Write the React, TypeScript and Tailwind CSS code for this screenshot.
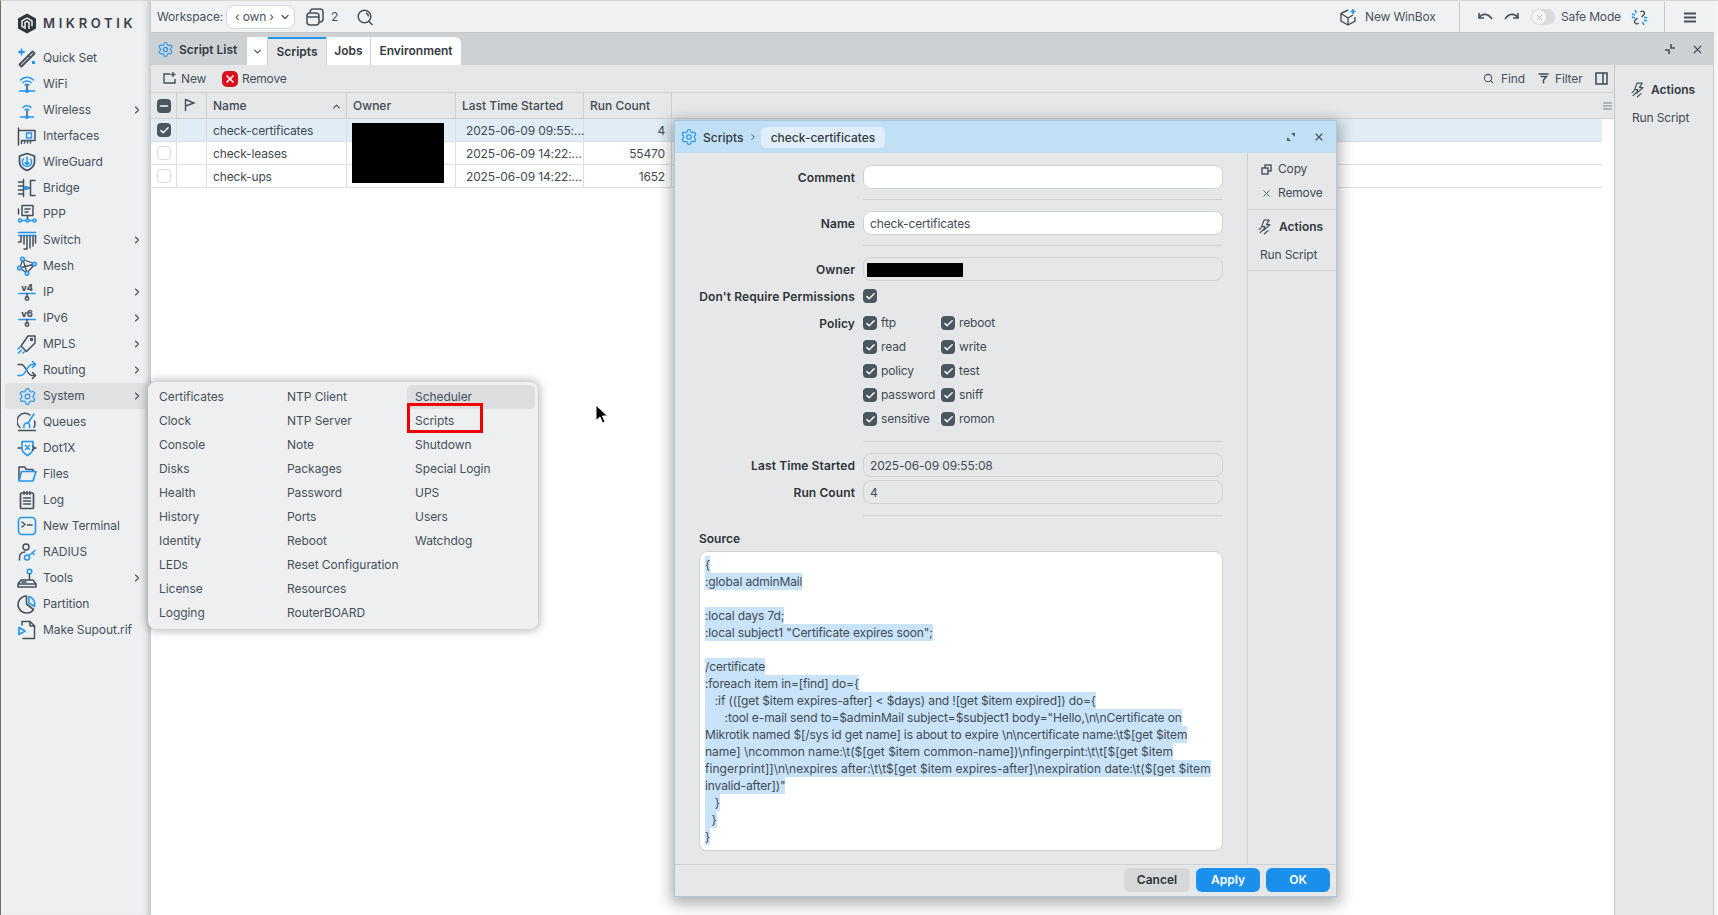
import React from "react";
import { Settings, ChevronDown, ChevronRight, ChevronUp, X, Search, Check, Minus } from "lucide-react";

const G = "#46505b";
const B = "#2196f3";

function Ic({ children, size = 20, className = "" }: { children: React.ReactNode; size?: number; className?: string }) {
  return (
    <svg width={size} height={size} viewBox="0 0 20 20" fill="none" stroke={G} strokeWidth={1.5} strokeLinecap="round" strokeLinejoin="round" className={"shrink-0 " + className}>
      {children}
    </svg>
  );
}

const icons: Record<string, React.ReactNode> = {
  "Quick Set": (<Ic><path d="M2.5 16.500L15.500 3.500l2 2L4.500 18.500z" strokeWidth={1.8} /><path d="M11.500 7.500l2 2" /><path d="M4.500 1.500v5M2 4h5" stroke={B} strokeWidth={1.8} /><rect x="15" y="13" width="3" height="3" fill={B} stroke="none" /></Ic>),
  WiFi: (<Ic><path d="M3.500 6a9 9 0 0 1 13 0M6 8.600a5.600 5.600 0 0 1 8 0M8 11a2.800 2.800 0 0 1 4 0" stroke={B} /><path d="M10 11v5.500" /><path d="M2.500 17h15" stroke={B} /><circle cx="10" cy="17" r="1.300" fill={B} stroke={B} /></Ic>),
  Wireless: (<Ic><path d="M6 7.500a5.600 5.600 0 0 1 8 0M8 10a2.800 2.800 0 0 1 4 0" stroke={B} /><path d="M10 11v5.500" /><path d="M3.500 17h13" stroke={B} /><circle cx="10" cy="17" r="1.300" fill={B} stroke={B} /></Ic>),
  Interfaces: (<Ic><path d="M1.500 2v17M1.500 4.500H18v10H4.500v3M7.500 15v2M10.500 15v2M13.500 15v2" /><rect x="9.500" y="7" width="5" height="5" stroke={B} /></Ic>),
  WireGuard: (<Ic><path d="M10 1.500l7.500 2.500v6c0 4.500-3.500 7-7.500 8.500-4-1.500-7.500-4-7.500-8.500V4z" strokeWidth={1.7} /><path d="M6.500 7a4.600 4.600 0 1 0 7 0" stroke={B} /><path d="M10 5v8M8 10.500l2 2.500 2-2.500" stroke={B} /></Ic>),
  Bridge: (<Ic><path d="M6.500 1.500v17M1.500 4h5M1.500 8h5M1.500 12h5M1.500 16h5M18 2.500h-4.500v15H18M13.500 10h-4" /><circle cx="9" cy="10" r="1.500" fill={B} stroke={B} /></Ic>),
  PPP: (<Ic><rect x="5" y="1.500" width="11" height="10" rx=".5" /><path d="M8 5h5M8 8h3M10.500 11.500V16M1.500 5v5" /><path d="M3 16.500h15" stroke={B} /><circle cx="3" cy="16.500" r="1.500" stroke={B} fill="#eeeff1" /><circle cx="17.500" cy="16.500" r="1.500" stroke={B} fill="#eeeff1" /><circle cx="10.500" cy="16.500" r="1.500" stroke={B} fill="#eeeff1" /></Ic>),
  Switch: (<Ic><path d="M1.500 2.500h17M1.500 5.500h17" stroke={B} /><path d="M4 6v6H1.500M7 6v8M10 6v13H7M13 6v12M16 6v10M18.500 6v7" /></Ic>),
  Mesh: (<Ic><path d="M6 3.500l12 4.500-8 9zM6 3.500L2.500 12 10 17M2.500 12L18 8" strokeWidth={1.3} /><circle cx="5.500" cy="3" r="1.800" stroke={B} fill="#eeeff1" /><circle cx="17.500" cy="8" r="1.800" stroke={B} fill="#eeeff1" /><circle cx="2.500" cy="12" r="1.800" stroke={B} fill="#eeeff1" /><circle cx="10" cy="17.500" r="1.800" stroke={B} fill="#eeeff1" /></Ic>),
  IP: (<Ic><text x="10" y="8.500" fontSize="9" fontWeight="800" textAnchor="middle" fill={G} stroke="none" fontFamily="Inter, sans-serif">v4</text><path d="M2 11.500h16" stroke={B} strokeWidth={1.7} /><path d="M10 11.500v3" /><circle cx="10" cy="16.500" r="1.700" /></Ic>),
  IPv6: (<Ic><text x="10" y="8.500" fontSize="9" fontWeight="800" textAnchor="middle" fill={G} stroke="none" fontFamily="Inter, sans-serif">v6</text><path d="M2 11.500h16" stroke={B} strokeWidth={1.7} /><path d="M10 11.500v3" /><circle cx="10" cy="16.500" r="1.700" /></Ic>),
  MPLS: (<Ic><path d="M11 2h7v7l-8.500 8.500L4 12z" /><circle cx="14.500" cy="5.500" r="1" /><path d="M1 15l2-2M1.500 19l3-3M6 19l1.500-1.500" stroke={B} /></Ic>),
  Routing: (<Ic><path d="M1 4.500h3c5 0 6 11 11 11h3" /><path d="M1 15.500h3c5 0 6-11 11-11h3" stroke={B} /><path d="M15.500 1.500l3 3-3 3" stroke={B} /><path d="M15.500 12.500l3 3-3 3" /></Ic>),
  System: (<Settings size={19} color={B} strokeWidth={1.5} className="mx-[0.5px] shrink-0" />),
  Queues: (<Ic><path d="M3 15.500A8 8 0 0 1 13 3M17.500 9a8 8 0 0 1-.500 6.500M1.500 18.500h17" /><path d="M17 2l-6 9" stroke={B} /><path d="M7 15.500a3.500 3.500 0 0 1 4-4.500l1 1a3.500 3.500 0 0 1 .5 3.500" stroke={B} /></Ic>),
  Dot1X: (<Ic><path d="M5 3.500h11v7c0 3-2 5-5.500 7C7 15.500 5 13.500 5 10.500z" stroke={B} strokeWidth={1.6} /><path d="M8.500 7.500l4 4M12.500 7.500l-4 4" stroke={B} /><path d="M1 10h3M17 10h2M15.500 8l2.500 2-2.500 2" /></Ic>),
  Files: (<Ic><path d="M2 16V3h5.500l2 2.500H16v2" /><path d="M2 17l2.500-9.500H19L16 17z" stroke={B} strokeWidth={1.6} /></Ic>),
  Log: (<Ic><rect x="3.500" y="3" width="13" height="15.500" rx="1" strokeWidth={1.7} /><path d="M7 1.500v3M10 1.500v3M13 1.500v3M6.500 8h7M6.500 11h7M6.500 14h7" /></Ic>),
  "New Terminal": (<Ic><rect x="1.500" y="1.500" width="17" height="17" rx="3.500" stroke={B} strokeWidth={1.6} /><path d="M5 6l3 2.500L5 11M10.500 9H15" /></Ic>),
  RADIUS: (<Ic><circle cx="9" cy="5" r="3" /><path d="M2.500 18v-2.500c0-3 2-5.500 5.500-5.500" /><circle cx="10" cy="15.500" r="2.500" stroke={B} /><path d="M12 13.500l6-5M15.500 10.500l1.500 2" stroke={B} /></Ic>),
  Tools: (<Ic><circle cx="12.500" cy="3.500" r="2.300" stroke={B} /><path d="M12.500 6v6M4 12h12l3 4v3H1v-3zM1 16h18M5 14h4" /></Ic>),
  Partition: (<Ic><path d="M9.500 2a8.500 8.500 0 1 0 7 13.500L9.500 10z" strokeWidth={1.6} /><path d="M12 2.500a8 8 0 0 1 5.500 10L12 9z" stroke={B} /></Ic>),
  "Make Supout.rif": (<Ic><path d="M5 5V1.500h8l4.500 4.500V18.500H6" /><path d="M13 1.500V6h4.500" /><path d="M2 7.500l6 3.500-6 3.500z" stroke={B} strokeWidth={1.7} /></Ic>),
};

const nav: [string, boolean][] = [
  ["Quick Set", false], ["WiFi", false], ["Wireless", true], ["Interfaces", false], ["WireGuard", false], ["Bridge", false], ["PPP", false], ["Switch", true], ["Mesh", false], ["IP", true], ["IPv6", true], ["MPLS", true], ["Routing", true], ["System", true], ["Queues", false], ["Dot1X", false], ["Files", false], ["Log", false], ["New Terminal", false], ["RADIUS", false], ["Tools", true], ["Partition", false], ["Make Supout.rif", false],
];

const subCols = [
  ["Certificates", "Clock", "Console", "Disks", "Health", "History", "Identity", "LEDs", "License", "Logging"],
  ["NTP Client", "NTP Server", "Note", "Packages", "Password", "Ports", "Reboot", "Reset Configuration", "Resources", "RouterBOARD"],
  ["Scheduler", "Scripts", "Shutdown", "Special Login", "UPS", "Users", "Watchdog"],
];

const sourceLines: [string, string][] = [
  ["{", "tracking-[-0.12px]"],
  [":global adminMail", "tracking-[-0.12px]"],
  ["", ""],
  [":local days 7d;", "tracking-[-0.12px]"],
  [':local subject1 "Certificate expires soon";', "tracking-[-0.12px]"],
  ["", ""],
  ["/certificate", "tracking-[-0.12px]"],
  [":foreach item in=[find] do={", "tracking-[-0.12px]"],
  ["   :if (([get $item expires-after] < $days) and ![get $item expired]) do={", "tracking-[-0.12px]"],
  ['      :tool e-mail send to=$adminMail subject=$subject1 body="Hello,\\n\\nCertificate on', "tracking-[-0.11px]"],
  ["Mikrotik named $[/sys id get name] is about to expire \\n\\ncertificate name:\\t$[get $item", "tracking-[-0.15px]"],
  ["name] \\ncommon name:\\t($[get $item common-name])\\nfingerpint:\\t\\t[$[get $item", "tracking-[0px]"],
  ["fingerprint]]\\n\\nexpires after:\\t\\t$[get $item expires-after]\\nexpiration date:\\t($[get $item", "tracking-[0.04px]"],
  ['invalid-after])"', "tracking-[-0.12px]"],
  ["   }", "tracking-[-0.12px]"],
  ["  }", "tracking-[-0.12px]"],
  ["}", "tracking-[-0.12px]"],
];

function Box({ on, minus, cls = "" }: { on?: boolean; minus?: boolean; cls?: string }) {
  if (minus)
    return <span className={"flex h-[14px] w-[14px] shrink-0 items-center justify-center rounded-[4px] bg-[#4b5661] " + cls}><Minus size={12} color="#fff" strokeWidth={3} /></span>;
  if (on)
    return <span className={"flex h-[14px] w-[14px] shrink-0 items-center justify-center rounded-[4px] bg-[#4b5661] " + cls}><Check size={11} color="#fff" strokeWidth={3} /></span>;
  return <span className={"block h-[14px] w-[14px] shrink-0 rounded-[4px] border border-[#d8dbdd] bg-white " + cls} />;
}

function Actions() {
  return (
    <Ic size={16}>
      <path d="M14 1.500H7.500L4.500 9.500h4L7 14l8-7h-4.500z" />
      <path d="M1.500 13l2.500-2M2.500 17l4-3.500M8 18.500l4.500-4" stroke={G} />
    </Ic>
  );
}

function Cols({ cells, row }: { cells: React.ReactNode[]; row?: boolean }) {
  const w = ["w-[26px]", "w-[30px]", "w-[140px]", "w-[109px]", "w-[128px]", "w-[88px]"];
  return (
    <>
      {cells.map((c, i) => (
        <div key={i} className={"flex h-full shrink-0 items-center border-r " + (row ? "border-[#dcdfe1] " : "border-[#cdd1d4] ") + w[i]}>
          {c}
        </div>
      ))}
    </>
  );
}

function Row({ name, date, count, on }: { name: string; date: string; count: string; on?: boolean }) {
  return (
    <div className={"flex h-[23px] items-center border-b border-[#dcdfe1] text-[#414a52] " + (on ? "bg-[#e0edf6]" : "bg-white")}>
      <Cols row cells={[
        <Box on={on} cls="ml-[6px]" />,
        null,
        <span className="pl-[6px] pt-px">{name}</span>,
        null,
        <span className="whitespace-nowrap pl-[10px] pt-px">{date}</span>,
        <span className="w-full pr-[6px] pt-px text-right">{count}</span>,
      ]} />
    </div>
  );
}

function Line() {
  return <div className="h-px w-[360px] bg-[#cfd2d5]" />;
}

function Field({ label, value, white, mt, children }: { label: string; value?: string; white?: boolean; mt: string; children?: React.ReactNode }) {
  return (
    <div className={"flex items-center gap-2 " + mt}>
      <div className="w-[180px] pt-px text-right font-semibold tracking-[0.1px] text-[#2e3338]">{label}</div>
      <div className={"flex h-6 w-[360px] items-center rounded-lg border border-[#d0d3d6] px-[6px] pt-px text-[#414a52] " + (white ? "bg-white" : "bg-[#e6e7e9]")}>
        {value}
        {children}
      </div>
    </div>
  );
}

function Pol({ text }: { text: string }) {
  return (
    <div className="flex h-6 items-center gap-1 text-[#414a52]">
      <Box on />
      <span>{text}</span>
    </div>
  );
}

export default function App() {
  return (
    <div className="relative flex h-[915px] w-[1718px] overflow-hidden border-t border-l border-t-[#d6d6d4] border-l-[#6f6f6b] bg-[#f3f4f5] text-[12px] tracking-[-0.15px] text-[#414a52]" style={{ fontFamily: "Inter, 'Noto Sans', sans-serif" }}>
      {/* Sidebar */}
      <aside className="flex h-full w-[150px] shrink-0 flex-col bg-[#eeeff1] shadow-[inset_-7px_0_6px_-5px_rgba(90,100,110,0.35)]">
        <div className="flex h-[44px] shrink-0 items-center gap-[6px] pl-[16px]">
          <svg width="20" height="21" viewBox="0 0 20 21" className="shrink-0">
            <path d="M10 .5l9 5v10l-9 5-9-5v-10z" fill="#2f353b" />
            <path d="M10 5l5 2.800v5.500M10 5L5 7.800v5.500l3 1.700V9.500l2-1.200 2 1.200V16" fill="none" stroke="#fff" strokeWidth="1.400" />
          </svg>
          <span className="whitespace-nowrap text-[13px] font-semibold leading-none tracking-[0.28em] text-[#3a4047]">MIKROTIK</span>
        </div>
        <nav className="flex flex-col pl-1 tracking-[-0.08px]">
          {nav.map(([n, sub]) => (
            <div key={n} className={"flex h-[26px] items-center gap-[6px] rounded-l-[4px] pl-3 " + (n === "System" ? "bg-[#dfe1e3]" : "")}>
              {icons[n]}
              <span className="flex-1 whitespace-nowrap text-[#47515b]">{n}</span>
              {sub && <ChevronRight size={12} strokeWidth={2.2} color={G} className="mr-[8px]" />}
            </div>
          ))}
        </nav>
      </aside>

      {/* Main */}
      <div className="flex h-full w-[1563px] shrink-0 flex-col border-r-0">
        {/* top bar */}
        <header className="flex h-[32px] shrink-0 items-center border-b border-[#c5c9cc] bg-[#f0f1f2] pl-[6px] pr-[18px] pt-[1px] text-[#47515b]">
          <span className="w-[64px] whitespace-nowrap">Workspace:</span>
          <div className="ml-[5px] flex h-[24px] w-[69px] items-center rounded-lg border border-[#d5d8da] bg-white pl-[8px]">
            <span className="flex-1 whitespace-pre">‹ own ›</span>
            <ChevronDown size={12} strokeWidth={2.4} className="mr-[3px]" />
          </div>
          <svg width="18" height="18" viewBox="0 0 18 18" fill="none" stroke={G} strokeWidth="1.500" className="ml-[11px]">
            <rect x="1" y="5" width="12" height="12" rx="3" />
            <path d="M1 9h12M4 5V4a3 3 0 0 1 3-3h7a3 3 0 0 1 3 3v7a3 3 0 0 1-3 3h-1" />
          </svg>
          <span className="ml-[7px] w-[7px]">2</span>
          <svg width="17" height="17" viewBox="0 0 17 17" fill="none" stroke={G} strokeWidth="1.500" className="ml-[19px]">
            <circle cx="7.500" cy="7.500" r="6.300" />
            <path d="M11.500 12l4 4M9 4a4 4 0 0 1 2.500 3.500" />
          </svg>
          <div className="flex-1" />
          <svg width="18" height="18" viewBox="0 0 18 18" fill="none" stroke={G} strokeWidth="1.400">
            <path d="M9 2L2 5.500v7.500l7 4 7-4V9M2 5.500L9 10l5-3M9 10v7" />
            <path d="M14 1v5M11.500 3.500h5" stroke={B} strokeWidth="1.600" />
          </svg>
          <span className="ml-2 w-[68px] whitespace-nowrap">New WinBox</span>
          <div className="ml-[26px] h-full w-px bg-[#c5c9cc]" />
          <svg width="15" height="10" viewBox="0 0 15 10" fill="none" stroke={G} strokeWidth="1.600" className="ml-[18px]">
            <path d="M1 1v5h5M1 6c3-5 9-5 13 1" />
          </svg>
          <svg width="15" height="10" viewBox="0 0 15 10" fill="none" stroke={G} strokeWidth="1.600" className="ml-[11px]">
            <path d="M14 1v5H9M14 6C11 1 5 1 1 7" />
          </svg>
          <div className="ml-[12px] flex h-4 w-6 items-center rounded-full bg-[#d8dadc] pl-[1px]">
            <span className="flex h-[14px] w-[14px] items-center justify-center rounded-full bg-[#f4f5f6]"><X size={9} color="#b4b8bc" strokeWidth={2.5} /></span>
          </div>
          <span className="ml-[6px] w-[58px] whitespace-nowrap">Safe Mode</span>
          <svg width="17" height="17" viewBox="0 0 17 17" fill="none" stroke={G} strokeWidth="1.400" className="ml-[12px]">
            <path d="M9.500 3a2.300 2.300 0 0 1 4 2l-3 3M7.500 14a2.300 2.300 0 0 1-4-2l3-3" />
            <path d="M4 1l1.500 3M1 5l3 1M13 16l-1.500-3M16 12l-3-1M13 8l3 1M4 9L1 8" stroke={B} strokeWidth="1.600" />
          </svg>
          <div className="ml-[16px] h-full w-px bg-[#c5c9cc]" />
          <svg width="12" height="11" viewBox="0 0 12 11" stroke={G} strokeWidth="1.800" className="ml-[19px]">
            <path d="M0 1.500h12M0 5.500h12M0 9.500h12" />
          </svg>
        </header>

        {/* window */}
        <div className="flex min-h-0 flex-1 flex-col">
          <div className="flex h-[32px] shrink-0 items-end bg-[#cdd1d4] pl-[6px]">
            <div className="flex h-full items-center gap-[5px] pr-[8px] font-semibold tracking-normal text-[#33393f]">
              <Settings size={17} color={B} strokeWidth={1.5} />
              <span className="w-[60px] whitespace-nowrap pt-px">Script List</span>
            </div>
            <div className="flex h-[28px] w-[20px] items-center justify-center bg-white"><ChevronDown size={11} strokeWidth={2.6} color={G} /></div>
            <div className="ml-px flex h-[28px] w-[58px] items-center justify-center border-t-2 border-[#2196f3] bg-[#e6e7e9] font-semibold tracking-normal text-[#33393f]">Scripts</div>
            <div className="ml-px flex h-[28px] w-[43px] items-center justify-center bg-white font-semibold tracking-normal text-[#33393f]">Jobs</div>
            <div className="ml-px flex h-[28px] w-[90px] items-center justify-center rounded-tr-md bg-white font-semibold tracking-normal text-[#33393f]">Environment</div>
            <div className="flex-1" />
            <div className="flex h-full items-center pr-[10px]">
              <svg width="12" height="12" viewBox="0 0 12 12" fill="none" stroke={G} strokeWidth="1.600" className="mr-[15px]">
                <path d="M7 1v4h4M5 11V7H1" />
              </svg>
              <X size={13} color={G} strokeWidth={2.2} />
            </div>
          </div>

          <div className="flex min-h-0 flex-1">
            <div className="flex w-[1463px] shrink-0 flex-col bg-white">
              <div className="flex h-[28px] shrink-0 items-center border-b border-[#cdd1d4] bg-[#e6e7e9] pl-[12px] text-[#47515b]">
                <svg width="13" height="13" viewBox="0 0 13 13" fill="none" stroke={G} strokeWidth="1.400">
                  <path d="M7 2H1v9h11V7M10 0v5M7.500 2.500h5" />
                </svg>
                <span className="ml-[5px] w-[24px]">New</span>
                <span className="ml-[17px] flex h-4 w-4 items-center justify-center rounded-[5px] bg-[#d9101c]"><X size={12} color="#fff" strokeWidth={3.2} /></span>
                <span className="ml-1">Remove</span>
                <div className="flex-1" />
                <Search size={11} strokeWidth={2.2} color={G} />
                <span className="ml-[7px] w-[22px]">Find</span>
                <svg width="11" height="11" viewBox="0 0 11 11" fill="none" stroke={G} strokeWidth="1.500" className="ml-[15px]">
                  <path d="M.5 1h10M2.500 3.500h6L5.500 7v3.500" />
                </svg>
                <span className="ml-[6px] w-[27px]">Filter</span>
                <svg width="13" height="13" viewBox="0 0 13 13" fill="none" stroke={G} strokeWidth="1.600" className="ml-[13px] mr-[6px]">
                  <rect x="1" y="1" width="11" height="11" />
                  <path d="M8 1v11" />
                </svg>
              </div>
              <div className="flex h-[26px] shrink-0 items-center border-b border-[#cdd1d4] bg-[#e6e7e9] font-medium tracking-normal text-[#414a52]">
                <Cols cells={[
                  <Box minus cls="ml-[6px]" />,
                  <svg width="12" height="13" viewBox="0 0 12 13" fill="none" stroke={G} strokeWidth="1.400" className="ml-[7px] -mt-[2px]"><path d="M1.500 1v12M1.500 1.500L10 5l-8.500 3" /></svg>,
                  <div className="flex w-full items-center justify-between pl-[6px] pr-[4px] pt-px">Name<ChevronUp size={11} strokeWidth={2.6} color={G} /></div>,
                  <span className="pl-[6px] pt-px">Owner</span>,
                  <span className="whitespace-nowrap pl-[6px] pt-px">Last Time Started</span>,
                  <span className="whitespace-nowrap pl-[6px] pt-px">Run Count</span>,
                ]} />
                <div className="flex-1" />
                <svg width="9" height="8" viewBox="0 0 9 8" stroke="#7b848c" strokeWidth="1" className="mr-[2px]"><path d="M0 1h9M0 4h9M0 7h9" /></svg>
              </div>
              <div className="w-[1451px]">
                <Row on name="check-certificates" date="2025-06-09 09:55:…" count="4" />
                <Row name="check-leases" date="2025-06-09 14:22:…" count="55470" />
                <Row name="check-ups" date="2025-06-09 14:22:…" count="1652" />
              </div>
            </div>
            <div className="w-[100px] shrink-0 border-l border-r border-[#c5c9cc] bg-[#e6e7e9] pl-[16px] pt-[16px]">
              <div className="flex items-center gap-[4px] font-semibold tracking-normal text-[#33393f]"><Actions /><span>Actions</span></div>
              <div className="ml-px mt-[10px] text-[#414a52]">Run Script</div>
            </div>
          </div>
        </div>
      </div>

      {/* Redaction in owner column */}
      <div className="absolute left-[351px] top-[122px] h-[60px] w-[92px] bg-black" />

      {/* System submenu */}
      <div className="absolute left-[147px] top-[381px] flex h-[247px] w-[390px] rounded-[8px] bg-[#eeeff1] p-[3px] tracking-[-0.05px] shadow-[0_0_8px_2px_rgba(0,0,0,0.28)]">
        {subCols.map((col, i) => (
          <div key={i} className="w-[128px]">
            {col.map((t) => (
              <div key={t} className={"flex h-6 items-center whitespace-nowrap rounded-[5px] px-2 text-[#47515b] " + (t === "Scheduler" ? "bg-[#dcdee0]" : "")}>{t}</div>
            ))}
          </div>
        ))}
        <div className="absolute left-[259px] top-[21px] h-[30px] w-[76px] border-[3px] border-[#f20000]" />
      </div>

      {/* Cursor */}
      <svg width="14" height="21" viewBox="0 0 14 21" className="absolute left-[594px] top-[403px]">
        <path d="M1 1v15.500l4-3.500 2.500 6 2.500-1-2.500-6h5z" fill="#000" stroke="#fff" strokeWidth="1" />
      </svg>

      {/* Script dialog */}
      <div className="absolute left-[673px] top-[119px] flex h-[777px] w-[663px] flex-col border border-[#a9c6dc] bg-[#e6e7e9] shadow-[0_4px_14px_3px_rgba(0,0,0,0.32)]">
        <div className="flex h-[32px] shrink-0 items-center bg-[#c1dff5] pl-[5px] text-[#33393f]">
          <Settings size={18} color={B} strokeWidth={1.5} />
          <span className="ml-[5px] w-[42px] whitespace-nowrap pt-px font-medium tracking-normal">Scripts</span>
          <ChevronRight size={10} strokeWidth={2.2} color={G} className="ml-[3px]" />
          <span className="ml-[3px] flex h-[21px] w-[124px] items-center justify-center rounded-[5px] bg-[#dfeefa] pt-px font-medium tracking-normal">check-certificates</span>
          <div className="flex-1" />
          <svg width="8" height="8" viewBox="0 0 10 10" fill="none" stroke={G} strokeWidth="1.800" className="mr-[18px]">
            <path d="M6 1h3v3M4 9H1V6" />
          </svg>
          <X size={12} color={G} strokeWidth={2.2} className="mr-[11px]" />
        </div>
        <div className="flex min-h-0 flex-1">
          <div className="w-[573px] shrink-0 border-r border-[#cfd2d5]">
            <Field label="Comment" white mt="mt-[12px]" />
            <div className="ml-[188px] mt-[10px]"><Line /></div>
            <Field label="Name" value="check-certificates" white mt="mt-[11px]" />
            <div className="ml-[188px] mt-[10px]"><Line /></div>
            <Field label="Owner" mt="mt-[11px]">
              <span className="-ml-[3px] block h-[14px] w-[96px] bg-black" />
            </Field>
            <div className="mt-2 flex h-[14px] items-center gap-2">
              <div className="w-[180px] whitespace-nowrap pt-px text-right font-semibold tracking-[0.12px] text-[#2e3338]">Don't Require Permissions</div>
              <Box on />
            </div>
            <div className="mt-2 flex gap-2">
              <div className="w-[180px] pt-[4px] text-right font-semibold tracking-[0.1px] text-[#2e3338]">Policy</div>
              <div className="grid grid-cols-[78px_auto] justify-start">
                {["ftp", "reboot", "read", "write", "policy", "test", "password", "sniff", "sensitive", "romon"].map((p) => (
                  <Pol key={p} text={p} />
                ))}
              </div>
            </div>
            <div className="ml-[188px] mt-[10px]"><Line /></div>
            <Field label="Last Time Started" value="2025-06-09 09:55:08" mt="mt-[11px]" />
            <Field label="Run Count" value="4" mt="mt-[3px]" />
            <div className="ml-[188px] mt-[11px]"><Line /></div>
            <div className="ml-6 mt-[15px] h-4 font-semibold leading-4 tracking-normal text-[#2e3338]">Source</div>
            <div className="ml-6 mt-1 h-[300px] w-[524px] rounded-lg border border-[#d0d3d6] bg-white px-[5px] py-1 text-[#414a52]">
              {sourceLines.map(([l, t], i) =>
                l ? (
                  <div key={i} className={"h-[17px] w-fit whitespace-pre bg-[#c8e3fa] text-[12px] leading-[17px] " + t}>{l}</div>
                ) : (
                  <div key={i} className="h-[17px]" />
                ),
              )}
            </div>
          </div>
          <div className="min-w-0 flex-1">
            <div className="border-b border-[#cfd2d5] pb-[4px] pl-[13px] pt-[4px] text-[#414a52]">
              <div className="flex h-6 items-center gap-[6px]">
                <svg width="11" height="11" viewBox="0 0 11 11" fill="none" stroke={G} strokeWidth="1.400"><rect x="4" y="1" width="6" height="6" /><rect x="1" y="4" width="6" height="6" fill="#e6e7e9" /></svg>
                Copy
              </div>
              <div className="flex h-6 items-center gap-[6px]"><X size={11} strokeWidth={2} color={G} />Remove</div>
            </div>
            <div className="border-b border-[#cfd2d5] pb-[1px] pl-[10px] pt-[5px]">
              <div className="flex h-6 items-center gap-[5px] font-semibold tracking-normal text-[#33393f]"><Actions /><span>Actions</span></div>
              <div className="flex h-[30px] items-center pl-[2px] pt-px text-[#414a52]">Run Script</div>
            </div>
          </div>
        </div>
        <div className="flex h-[32px] shrink-0 items-center justify-end gap-[6px] border-t border-[#cfd2d5] pb-[2px] pr-[6px] font-semibold tracking-normal">
          <div className="flex h-6 w-[66px] items-center justify-center rounded-md bg-[#d5d7d9] text-[#2e3338]">Cancel</div>
          <div className="flex h-6 w-[64px] items-center justify-center rounded-md bg-[#1b8fec] text-white">Apply</div>
          <div className="flex h-6 w-[64px] items-center justify-center rounded-md bg-[#1b8fec] text-white">OK</div>
        </div>
      </div>
    </div>
  );
}
